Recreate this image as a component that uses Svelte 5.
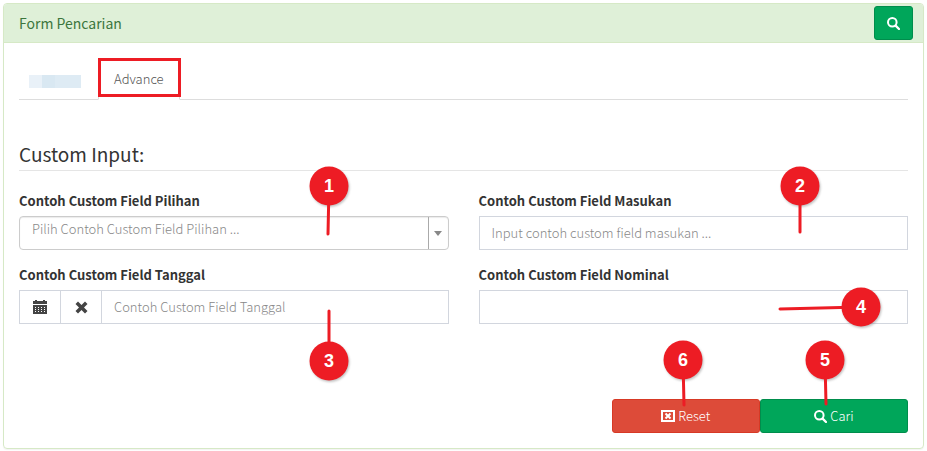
<script>
  let tab = $state('advance');
</script>

{#snippet search(size)}
  <svg width={size} height={size} viewBox="0 0 13 13" aria-hidden="true">
    <circle cx="5.3" cy="5.3" r="4.3" fill="none" stroke="currentColor" stroke-width="2" />
    <path d="M8.6 8.6 12 12" stroke="currentColor" stroke-width="2.3" stroke-linecap="round" />
  </svg>
{/snippet}

{#snippet marker(n, name, x, y)}
  <svg class="marker {name}" width="40" height="40" viewBox="-20 -20 40 40">
    <circle class="shade" cx="1" cy="1.5" r="19.5" />
    <line x1="0" y1="0" x2={x} y2={y} />
    <circle r="19.5" />
    <text y="6" text-anchor="middle">{n}</text>
  </svg>
{/snippet}

<section class="panel">
  <header>
    <h1>Form Pencarian</h1>
    <button class="btn green toggle" type="button" aria-label="Cari">{@render search(13)}</button>
  </header>
  <form onsubmit={(e) => e.preventDefault()}>
    <nav class="tabs">
      <button type="button" class="tab" class:active={tab === 'basic'} aria-label="Basic" onclick={() => (tab = 'basic')}>
        <span class="blocks"><i></i><i></i><i></i></span>
      </button>
      <button type="button" class="tab" class:active={tab === 'advance'} onclick={() => (tab = 'advance')}>
        Advance<span class="frame"></span>
      </button>
    </nav>

    <h2>Custom Input:</h2>

    <div class="grid">
      <div class="field">
        <label for="pilihan">Contoh Custom Field Pilihan</label>
        <div class="control">
          <select id="pilihan"><option>Pilih Contoh Custom Field Pilihan ...</option></select>
          <span class="arrow"></span>
          {@render marker(1, 'm1', -1, 48)}
        </div>
      </div>
      <div class="field">
        <label for="masukan">Contoh Custom Field Masukan</label>
        <div class="control">
          <input id="masukan" type="text" placeholder="Input contoh custom field masukan ..." />
          {@render marker(2, 'm2', 0, 46)}
        </div>
      </div>
      <div class="field">
        <label for="tanggal">Contoh Custom Field Tanggal</label>
        <div class="control">
          <button type="button" class="addon" aria-label="Kalender">
            <svg width="14" height="14" viewBox="0 0 14 14" aria-hidden="true">
              <path fill="currentColor" fill-rule="evenodd" d="M0 1h2V0h2v1h6V0h2v1h2v3H0zM0 5h14v9H0zM2 7v1h1V7zM5 7v1h1V7zM8 7v1h1V7zM11 7v1h1V7zM2 9v1h1V9zM5 9v1h1V9zM8 9v1h1V9zM11 9v1h1V9zM2 11v1h1v-1zM5 11v1h1v-1zM8 11v1h1v-1zM11 11v1h1v-1z" />
            </svg>
          </button>
          <button type="button" class="addon" aria-label="Hapus">
            <svg width="13" height="13" viewBox="0 0 13 13" aria-hidden="true">
              <path fill="currentColor" d="M3 .5 6.500 4 10 .5 12.500 3 9 6.500l3.500 3.500L10 12.500 6.500 9 3 12.500.5 10 4 6.500.5 3z" />
            </svg>
          </button>
          <input id="tanggal" type="text" placeholder="Contoh Custom Field Tanggal" />
          {@render marker(3, 'm3', 0, -50)}
        </div>
      </div>
      <div class="field">
        <label for="nominal">Contoh Custom Field Nominal</label>
        <div class="control">
          <input id="nominal" type="text" />
          {@render marker(4, 'm4', -81, 2)}
        </div>
      </div>
    </div>

    <div class="actions">
      <button class="btn red" type="reset">
        <svg width="14" height="12" viewBox="0 0 14 12" aria-hidden="true">
          <rect x="1" y="1" width="12" height="10" fill="none" stroke="currentColor" stroke-width="2" />
          <path d="m4.500 3.500 5 5M9.500 3.500l-5 5" stroke="currentColor" stroke-width="2" />
        </svg>
        Reset
        {@render marker(6, 'm6', 1, 45)}
      </button>
      <button class="btn green" type="submit">
        {@render search(13)}
        Cari
        {@render marker(5, 'm5', 1, 44)}
      </button>
    </div>
  </form>
</section>

<style>
  :global(body) { background: #fff; }
  .panel, .panel * { box-sizing: border-box; }
  .panel {
    margin: 3px;
    border: 1px solid #d6e9c6;
    border-radius: 4px;
    box-shadow: 0 1px 1px rgba(0, 0, 0, 0.05);
    color: #333;
    font: 13px/20px "Noto Sans CJK SC", "Open Sans", sans-serif;
  }
  button, input, select { font: inherit; margin: 0; }
  header {
    display: flex;
    justify-content: space-between;
    align-items: center;
    height: 39px;
    padding: 0 10px 0 15px;
    background: #dff0d8;
    border-bottom: 1px solid #d6e9c6;
    border-radius: 3px 3px 0 0;
  }
  h1 { margin: 0; font-size: 14px; font-weight: 400; color: #3c763d; }
  form { padding: 15px; }
  .tabs { display: flex; gap: 2px; height: 42px; border-bottom: 1px solid #ddd; }
  .tab {
    position: relative;
    height: 42px;
    padding: 0 15px;
    border: 1px solid transparent;
    background: none;
    color: #555;
    font-weight: 300;
  }
  .tab:first-child { padding: 4px 14px 0 9px; }
  .tab.active { background: #fff; border-color: #ddd; border-bottom-color: #fff; }
  .frame { position: absolute; inset: -1px -2px 2px -1px; border: 3px solid #ed1c24; }
  .blocks { display: flex; height: 13px; }
  .blocks i { width: 13px; background: #e9f1f8; }
  .blocks i:nth-child(2) { background: #d9e8f2; }
  .blocks i:nth-child(3) { width: 26px; background: #deebf4; }
  h2 {
    margin: 39px 0 20px;
    padding-bottom: 2px;
    border-bottom: 1px solid #e5e5e5;
    font-size: 19px;
    line-height: 29px;
    font-weight: 400;
  }
  .grid { display: grid; grid-template-columns: 1fr 1fr; gap: 15px 30px; }
  label { display: block; margin-bottom: 5px; font-weight: 700; }
  .control { position: relative; display: flex; height: 34px; }
  input, select {
    flex: 1;
    min-width: 0;
    padding: 6px 12px;
    border: 1px solid #d2d6de;
    border-radius: 0;
    background: #fff;
    color: #555;
    font-weight: 300;
  }
  input::placeholder { color: #888; opacity: 1; }
  select {
    appearance: none;
    padding: 0 40px 8px 12px;
    border-color: #ccc;
    border-radius: 4px;
    box-shadow: inset 0 1px 1px rgba(0, 0, 0, 0.08);
    color: #888;
  }
  .arrow {
    position: absolute;
    inset: 1px 1px 1px auto;
    display: grid;
    place-items: center;
    width: 20px;
    border-left: 1px solid #aaa;
    pointer-events: none;
  }
  .arrow::after { content: ''; border: 4px solid transparent; border-top: 5px solid #888; border-bottom: 0; }
  .addon {
    display: grid;
    place-items: center;
    width: 41px;
    padding: 0;
    border: 1px solid #d2d6de;
    border-right: 0;
    background: #fff;
    color: #444;
  }
  .actions { display: flex; justify-content: flex-end; margin-top: 75px; }
  .btn {
    position: relative;
    display: flex;
    align-items: center;
    justify-content: center;
    gap: 3px;
    height: 34px;
    padding: 0 12px;
    border: 1px solid;
    border-radius: 3px;
    color: #fff;
    font-weight: 300;
  }
  .actions .btn { width: 16.667%; }
  .toggle { width: 39px; }
  .green { background: #00a65a; border-color: #008d4c; }
  .red { background: #dd4b39; border-color: #d73925; }
  .marker {
    position: absolute;
    z-index: 1;
    overflow: visible;
    transform: translate(-50%, -50%);
    pointer-events: none;
    fill: #ed1c24;
  }
  .marker .shade { fill: #777; opacity: 0.45; filter: blur(1px); }
  .marker line { stroke: #ed1c24; stroke-width: 3; stroke-linecap: round; }
  .marker text { fill: #fff; font: bold 18px "Liberation Sans", Arial, sans-serif; }
  .m1 { left: 72.2%; top: -30px; }
  .m2 { left: 74.8%; top: -30px; }
  .m3 { left: 72.2%; top: 71px; }
  .m4 { left: 89%; top: 17px; }
  .m5 { left: 44%; top: -40px; }
  .m6 { left: 48%; top: -40px; }
</style>
